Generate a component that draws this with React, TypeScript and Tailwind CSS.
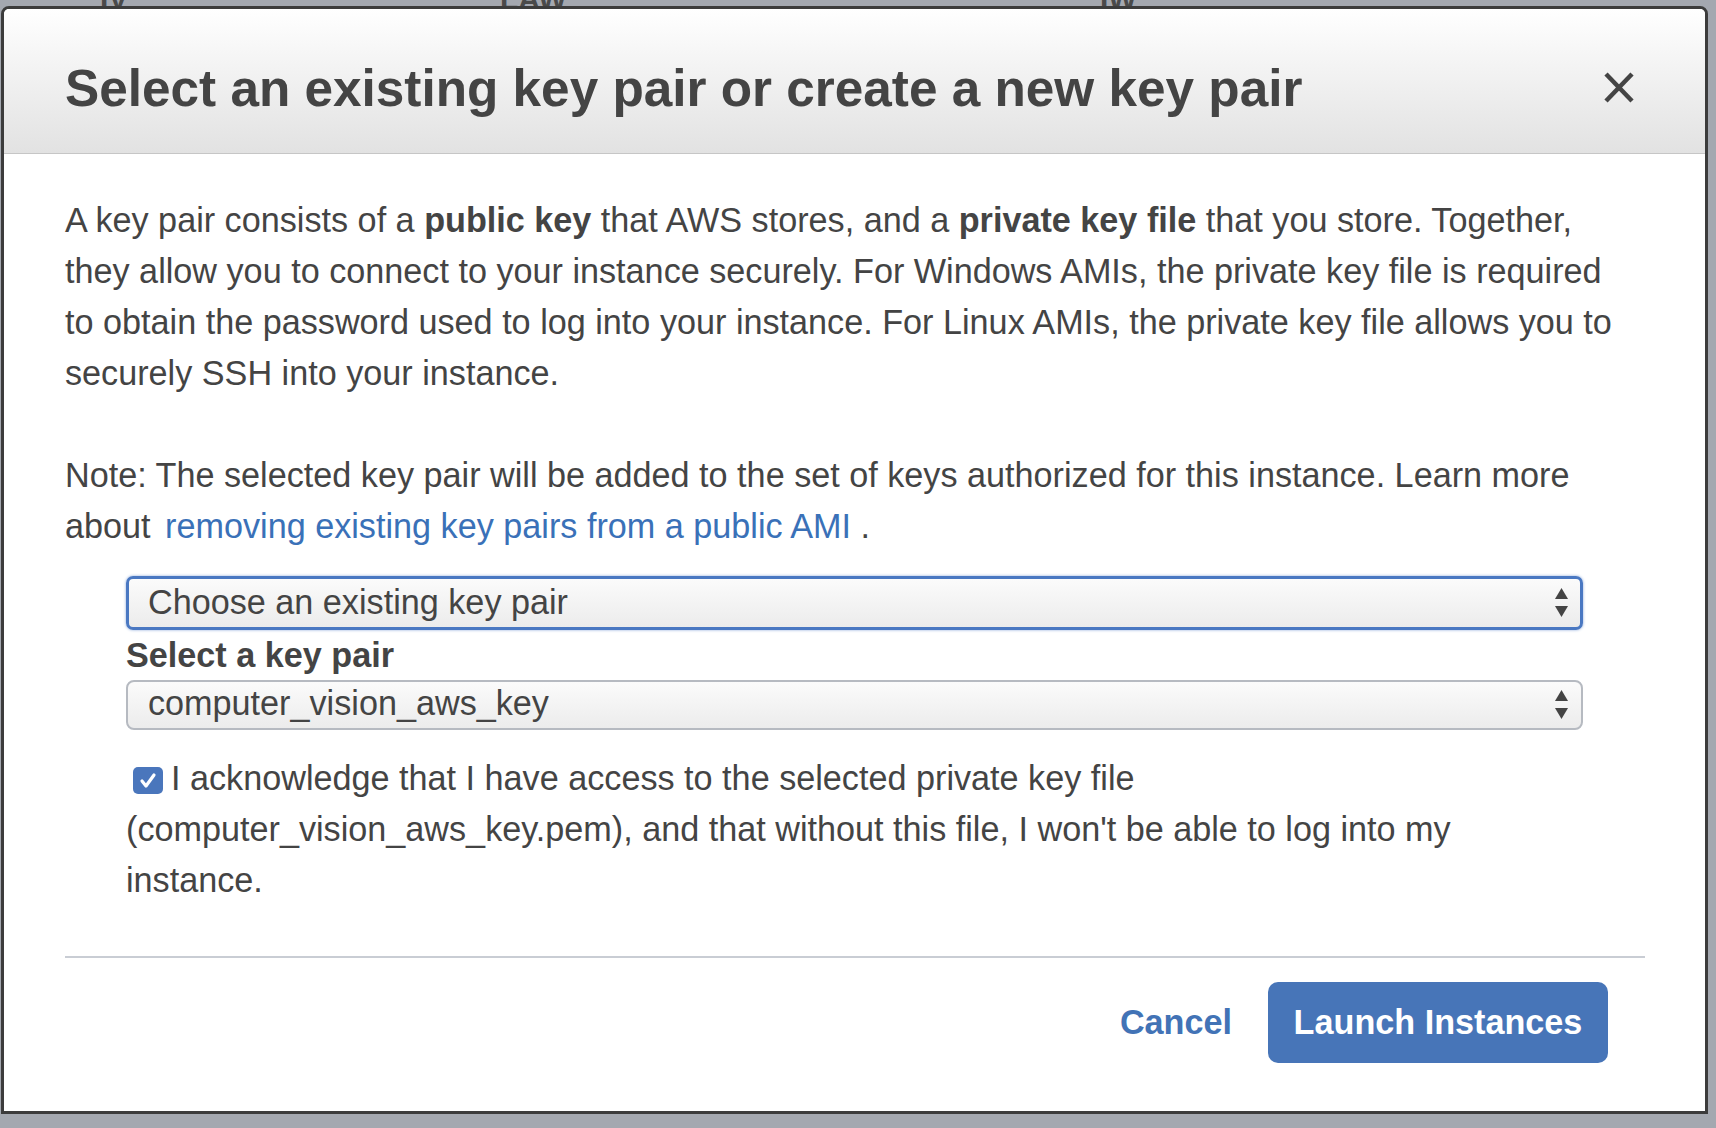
import React from "react";

const font = { fontFamily: '"Liberation Sans", Arial, Helvetica, sans-serif' };

function Arrows() {
  return (
    <svg width="13" height="30" viewBox="0 0 13 30" className="shrink-0">
      <polygon points="6.5,0 13,11 0,11" fill="#444" />
      <polygon points="0,18 13,18 6.5,29" fill="#444" />
    </svg>
  );
}

export default function App() {
  return (
    <div
      className="relative w-[1716px] h-[1128px] overflow-hidden bg-[#a4a8b0] pt-[6px] pl-[1px]"
      style={font}
    >
      {/* fragments of the page behind the modal */}
      <div className="absolute left-[100px] top-[-24px] text-[30px] font-bold text-[#4a4a4a]">IV</div>
      <div className="absolute left-[500px] top-[-24px] text-[30px] font-bold text-[#4a4a4a]">LAW</div>
      <div className="absolute left-[1100px] top-[-24px] text-[30px] font-bold text-[#4a4a4a]">IW</div>

      <div className="relative w-[1707px] h-[1108px] border-[3px] border-[#3c3c3c] rounded-t-[8px] bg-white flex flex-col overflow-hidden">
        {/* Header */}
        <div className="h-[145px] shrink-0 flex items-start justify-between pl-[61px] pr-[70px] pt-[54px] bg-linear-to-b from-white to-[#e2e2e2] border-b border-[#c6c6c6]">
          <h1 className="text-[51.3px] leading-none font-bold text-[#444] whitespace-nowrap">
            Select an existing key pair or create a new key pair
          </h1>
          <svg width="32" height="33" viewBox="0 0 32 33" className="mt-[8px] shrink-0">
            <line x1="3" y1="3" x2="29" y2="30" stroke="#444" strokeWidth="4.5" />
            <line x1="29" y1="3" x2="3" y2="30" stroke="#444" strokeWidth="4.5" />
          </svg>
        </div>

        {/* Body */}
        <div className="flex flex-col pl-[61px] pt-[41px] text-[34.2px] leading-[51px] text-[#444]">
          <p className="whitespace-nowrap">
            A key pair consists of a <b>public key</b> that AWS stores, and a <b>private key file</b> that you store. Together,
            <br />
            they allow you to connect to your instance securely. For Windows AMIs, the private key file is required
            <br />
            to obtain the password used to log into your instance. For Linux AMIs, the private key file allows you to
            <br />
            securely SSH into your instance.
          </p>
          <p className="mt-[51px] whitespace-nowrap">
            Note: The selected key pair will be added to the set of keys authorized for this instance. Learn more
            <br />
            about <a className="ml-[5px] text-[#3a71b8]">removing existing key pairs from a public AMI</a> .
          </p>

          <div className="ml-[61px] w-[1457px] flex flex-col">
            <div className="mt-[24px] h-[54px] border-[3px] border-[#4a78c2] rounded-[7px] bg-linear-to-b from-[#fbfbfb] to-[#ececec] shadow-[0_0_3px_#8aa8da] flex items-center justify-between pl-[19px] pr-[12px] pb-[3px]">
              <span className="leading-[40px]">Choose an existing key pair</span>
              <div className="pt-[3px]"><Arrows /></div>
            </div>
            <div className="mt-[5px] leading-[40px] font-bold">Select a key pair</div>
            <div className="mt-[5px] h-[50px] border-2 border-[#b6bac1] rounded-[8px] bg-linear-to-b from-[#fbfbfb] to-[#ececec] flex items-center justify-between pl-[20px] pr-[13px] pb-[4px]">
              <span className="leading-[40px]">computer_vision_aws_key</span>
              <div className="pt-[4px]"><Arrows /></div>
            </div>
            <p className="mt-[23px] whitespace-nowrap">
              <span className="inline-block align-[-4px] ml-[7px] mr-[8px] w-[30px] h-[27px] rounded-[5px] bg-[#4a76bc] relative">
                <svg width="30" height="27" viewBox="0 0 30 27" className="absolute left-0 top-0">
                  <polyline points="9,14 13,19 21,8" fill="none" stroke="white" strokeWidth="3.2" strokeLinecap="round" strokeLinejoin="round" />
                </svg>
              </span>
              I acknowledge that I have access to the selected private key file
              <br />
              (computer_vision_aws_key.pem), and that without this file, I won't be able to log into my
              <br />
              instance.
            </p>
          </div>

          <div className="mt-[50px] w-[1580px] h-[2px] bg-[#c9cdd4]" />

          <div className="mt-[24px] flex items-center justify-end pr-[97px] gap-[36px]">
            <span className="font-bold text-[#4273b6] leading-none">Cancel</span>
            <button className="w-[340px] h-[81px] rounded-[10px] bg-[#4775b8] text-white font-bold leading-none flex items-center justify-center">
              Launch Instances
            </button>
          </div>
        </div>
      </div>
    </div>
  );
}
